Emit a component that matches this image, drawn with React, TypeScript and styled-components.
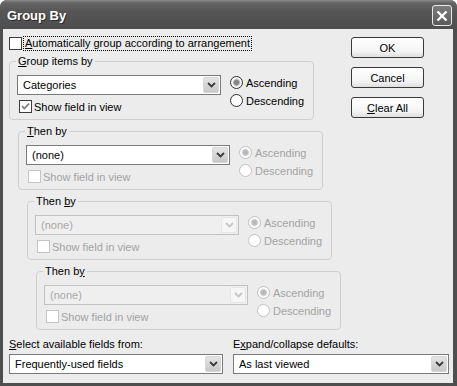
import styled, { createGlobalStyle, css } from "styled-components";

const GlobalStyle = createGlobalStyle`
  html, body {
    margin: 0;
    padding: 0;
    background: #ffffff;
  }
  body {
    font-family: "Liberation Sans", Arial, sans-serif;
    font-size: 11px;
    color: #000;
  }
`;

interface IDisabled {
    $disabled?: boolean;
}

interface ICheck extends IDisabled {
    $checked?: boolean;
}

const Window = styled.div`
    width: 457px;
    height: 386px;
    box-sizing: border-box;
    background: #4e4e4e;
    border-radius: 7px 7px 0 0;
    display: flex;
    flex-direction: column;
    overflow: hidden;
`;

const TitleBar = styled.div`
    height: 29px;
    flex: none;
    display: flex;
    align-items: center;
    justify-content: space-between;
    padding: 0 5px 0 7px;
    background: linear-gradient(
        180deg,
        #8a8a8a 0px,
        #646464 3px,
        #555555 12px,
        #4e4e4e 100%
    );
`;

const Title = styled.div`
    font-family: "Liberation Sans", Arial, sans-serif;
    font-weight: bold;
    font-size: 13px;
    color: #ffffff;
    text-shadow: 1px 1px 0 #2c2c2c;
    padding-top: 1px;
`;

const CloseButton = styled.div`
    width: 20px;
    height: 21px;
    box-sizing: border-box;
    border: 1px solid #e8e8e8;
    border-radius: 3px;
    background: linear-gradient(180deg, #7c7c7c, #5a5a5a);
    display: flex;
    align-items: center;
    justify-content: center;
    margin-top: 2px;
`;

const Body = styled.div`
    flex: 1;
    margin: 0 4px 3px 3px;
    background: #ececec;
    padding: 8px 5px 0 6px;
    display: flex;
    flex-direction: column;
`;

const TopArea = styled.div`
    display: grid;
    grid-template-columns: 342px 73px;
`;

const LeftColumn = styled.div`
    display: flex;
    flex-direction: column;
    gap: 5px;
`;

const CheckLine = styled.div<IDisabled & { $inset?: number }>`
    display: flex;
    align-items: center;
    gap: 2px;
    height: 13px;
    margin-left: ${(p) => p.$inset ?? 0}px;
    color: ${(p) => (p.$disabled ? "#a3a3a3" : "#000")};
`;

const Box = styled.div<ICheck>`
    width: 13px;
    height: 13px;
    box-sizing: border-box;
    border: 1px solid #3c3c3c;
    background: #ffffff;
    display: flex;
    align-items: center;
    justify-content: center;
    flex: none;
    ${(p) =>
        p.$disabled &&
        css`
            border-color: #c4c4c4;
        `}
`;

const FocusText = styled.span`
    outline: 1px dotted #000;
    padding: 0 1px;
    line-height: 13px;
`;

const U = styled.span`
    text-decoration: underline;
`;

const Group = styled.fieldset<{ $indent: number }>`
    margin: 0 0 0 ${(p) => p.$indent}px;
    width: 305px;
    box-sizing: border-box;
    border: 1px solid #cfcfcf;
    border-radius: 4px;
    padding: 7px 7px 6px 7px;
    min-width: 0;
`;

const Legend = styled.legend`
    padding: 0 2px;
    margin-left: -1px;
    line-height: 13px;
    color: #000;
`;

const GroupInner = styled.div`
    display: flex;
    gap: 9px;
`;

const LeftStack = styled.div`
    display: flex;
    flex-direction: column;
    gap: 5px;
`;

const Combo = styled.div<IDisabled & { $width?: string }>`
    width: ${(p) => p.$width ?? "204px"};
    height: 20px;
    box-sizing: border-box;
    border: 1px solid #7a7a7a;
    background: #ffffff;
    display: flex;
    align-items: center;
    justify-content: space-between;
    padding: 0 1px 0 5px;
    color: #000;
    ${(p) =>
        p.$disabled &&
        css`
            border-color: #c2c2c2;
            background: #efefef;
            color: #a8a8a8;
        `}
`;

const ComboArrow = styled.div<IDisabled>`
    width: 16px;
    height: 16px;
    box-sizing: border-box;
    border: 1px solid #d6d6d6;
    border-radius: 2px;
    background: linear-gradient(180deg, #e4e4e4, #c8c8c8);
    display: flex;
    align-items: center;
    justify-content: center;
    ${(p) =>
        p.$disabled &&
        css`
            background: #f6f6f6;
            border-color: #e6e6e6;
        `}
`;

const RadioCol = styled.div`
    display: flex;
    flex-direction: column;
    gap: 5px;
    padding-top: 1px;
`;

const RadioLine = styled.div<IDisabled>`
    display: flex;
    align-items: center;
    gap: 3px;
    height: 13px;
    color: ${(p) => (p.$disabled ? "#a3a3a3" : "#000")};
`;

const Radio = styled.div<ICheck>`
    width: 13px;
    height: 13px;
    box-sizing: border-box;
    border-radius: 50%;
    border: 1px solid #2e2e2e;
    background: #fff;
    flex: none;
    ${(p) =>
        p.$checked &&
        css`
            background: radial-gradient(
                circle,
                #808080 0,
                #8c8c8c 2.5px,
                #d8d8d8 3.5px,
                #fff 4.5px
            );
        `}
    ${(p) =>
        p.$disabled &&
        css`
            border-color: #c0c0c0;
        `}
    ${(p) =>
        p.$disabled &&
        p.$checked &&
        css`
            background: radial-gradient(
                circle,
                #b4b4b4 0,
                #bcbcbc 2.5px,
                #e6e6e6 3.5px,
                #fff 4.5px
            );
        `}
`;

const ButtonCol = styled.div`
    display: flex;
    flex-direction: column;
    gap: 9px;
`;

const Button = styled.div`
    height: 21px;
    box-sizing: border-box;
    border: 1px solid #3a3a3a;
    border-radius: 3px;
    background: linear-gradient(180deg, #ffffff 0%, #f4f4f4 70%, #dedede 100%);
    display: flex;
    align-items: center;
    justify-content: center;
`;

const BottomArea = styled.div`
    display: grid;
    grid-template-columns: 214px 216px;
    column-gap: 10px;
    margin-top: 8px;
`;

const Field = styled.div`
    display: flex;
    flex-direction: column;
    gap: 3px;
`;

const FieldLabel = styled.div`
    line-height: 13px;
`;

function Chevron({ disabled }: { disabled?: boolean }) {
    return (
        <svg width="9" height="6" viewBox="0 0 9 6">
            <path
                d="M1 1 L4.5 4.5 L8 1"
                fill="none"
                stroke={disabled ? "#c6c6c6" : "#3a3a3a"}
                strokeWidth="1.8"
            />
        </svg>
    );
}

function Check({ disabled }: { disabled?: boolean }) {
    return (
        <svg width="11" height="11" viewBox="0 0 11 11">
            <path
                d="M2 5.2 L4.3 7.6 L9 2.6"
                fill="none"
                stroke={disabled ? "#c0c0c0" : "#7d7d7d"}
                strokeWidth="1.7"
            />
        </svg>
    );
}

interface IThenBy {
    indent: number;
    label: React.ReactNode;
    value: string;
    comboDisabled?: boolean;
    checked?: boolean;
    optionsDisabled?: boolean;
}

function SortGroup({
    indent,
    label,
    value,
    comboDisabled,
    checked,
    optionsDisabled,
}: IThenBy) {
    return (
        <Group $indent={indent}>
            <Legend>{label}</Legend>
            <GroupInner>
                <LeftStack>
                    <Combo $disabled={comboDisabled}>
                        <span>{value}</span>
                        <ComboArrow $disabled={comboDisabled}>
                            <Chevron disabled={comboDisabled} />
                        </ComboArrow>
                    </Combo>
                    <CheckLine $inset={2} $disabled={optionsDisabled}>
                        <Box $disabled={optionsDisabled}>
                            {checked && <Check disabled={optionsDisabled} />}
                        </Box>
                        <span>Show field in view</span>
                    </CheckLine>
                </LeftStack>
                <RadioCol>
                    <RadioLine $disabled={optionsDisabled}>
                        <Radio $checked $disabled={optionsDisabled} />
                        Ascending
                    </RadioLine>
                    <RadioLine $disabled={optionsDisabled}>
                        <Radio $disabled={optionsDisabled} />
                        Descending
                    </RadioLine>
                </RadioCol>
            </GroupInner>
        </Group>
    );
}

function App() {
    return (
        <>
            <GlobalStyle />
            <Window>
                <TitleBar>
                    <Title>Group By</Title>
                    <CloseButton>
                        <svg width="12" height="12" viewBox="0 0 12 12">
                            <path
                                d="M1.5 1.5 L10.5 10.5 M10.5 1.5 L1.5 10.5"
                                stroke="#ffffff"
                                strokeWidth="2.4"
                            />
                        </svg>
                    </CloseButton>
                </TitleBar>
                <Body>
                    <TopArea>
                        <LeftColumn>
                            <CheckLine>
                                <Box />
                                <FocusText>
                                    <U>A</U>utomatically group according to
                                    arrangement
                                </FocusText>
                            </CheckLine>
                            <SortGroup
                                indent={0}
                                label={
                                    <>
                                        <U>G</U>roup items by
                                    </>
                                }
                                value="Categories"
                                checked
                            />
                            <SortGroup
                                indent={9}
                                label={
                                    <>
                                        <U>T</U>hen by
                                    </>
                                }
                                value="(none)"
                                optionsDisabled
                            />
                            <SortGroup
                                indent={18}
                                label={
                                    <>
                                        Then <U>b</U>y
                                    </>
                                }
                                value="(none)"
                                comboDisabled
                                optionsDisabled
                            />
                            <SortGroup
                                indent={27}
                                label={
                                    <>
                                        Then b<U>y</U>
                                    </>
                                }
                                value="(none)"
                                comboDisabled
                                optionsDisabled
                            />
                        </LeftColumn>
                        <ButtonCol>
                            <Button>OK</Button>
                            <Button>Cancel</Button>
                            <Button>
                                <span>
                                    <U>C</U>lear All
                                </span>
                            </Button>
                        </ButtonCol>
                    </TopArea>
                    <BottomArea>
                        <Field>
                            <FieldLabel>
                                <U>S</U>elect available fields from:
                            </FieldLabel>
                            <Combo $width="100%">
                                <span>Frequently-used fields</span>
                                <ComboArrow>
                                    <Chevron />
                                </ComboArrow>
                            </Combo>
                        </Field>
                        <Field>
                            <FieldLabel>
                                E<U>x</U>pand/collapse defaults:
                            </FieldLabel>
                            <Combo $width="100%">
                                <span>As last viewed</span>
                                <ComboArrow>
                                    <Chevron />
                                </ComboArrow>
                            </Combo>
                        </Field>
                    </BottomArea>
                </Body>
            </Window>
        </>
    );
}

export default App;
